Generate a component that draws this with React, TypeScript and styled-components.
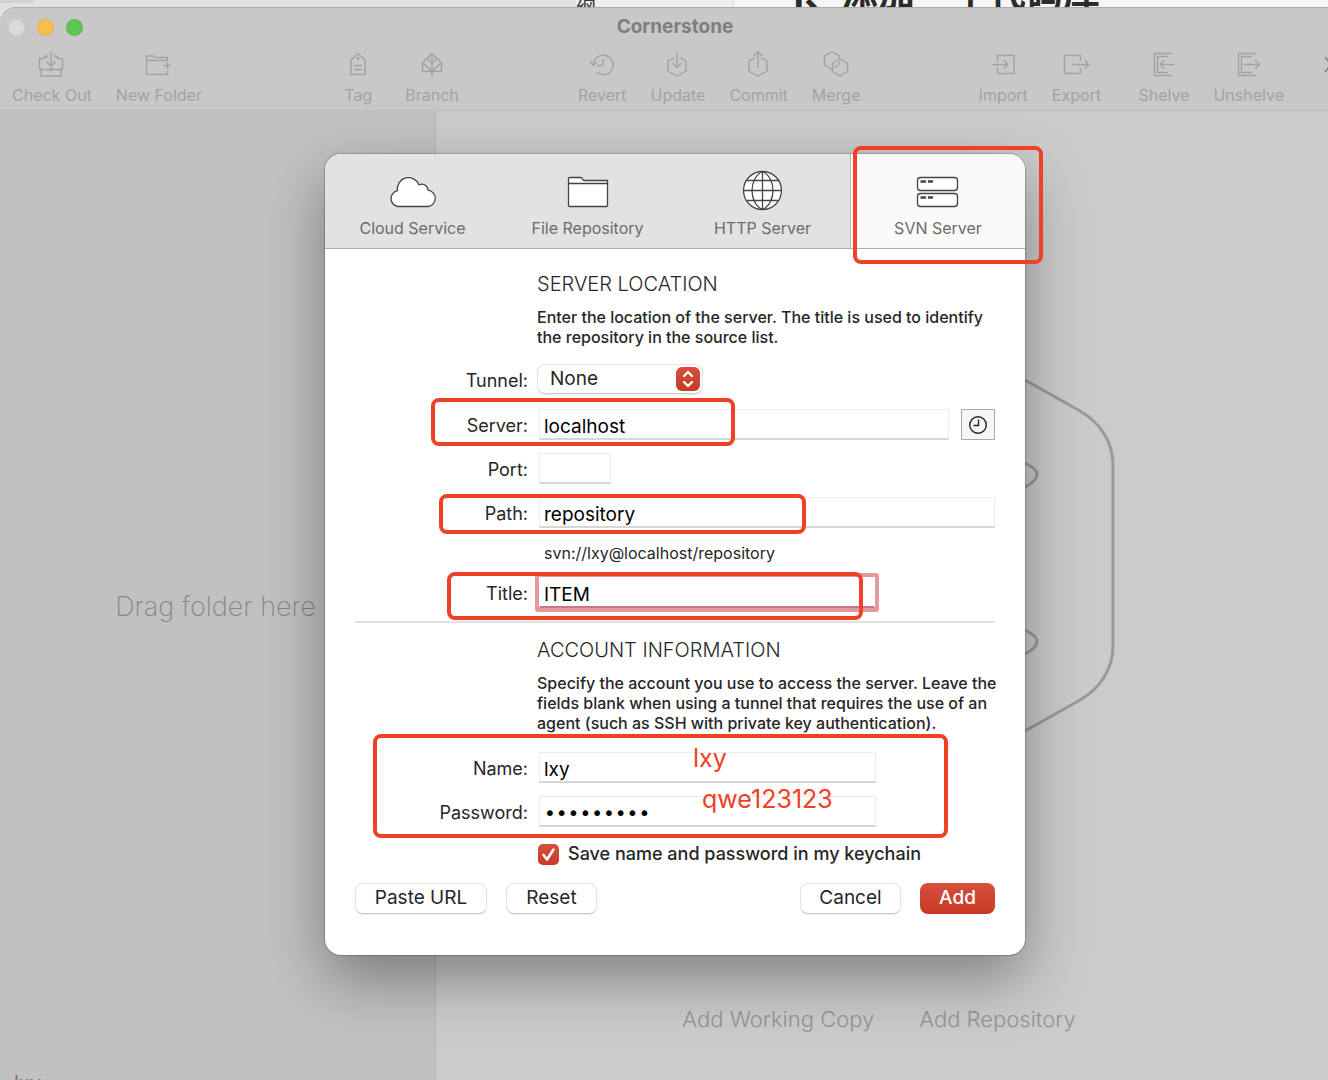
import React from "react";
import styled, { createGlobalStyle, css } from "styled-components";

const RED = "#ee4127";
const SANS = '"Inter", "Liberation Sans", sans-serif';

const GlobalStyle = createGlobalStyle`
  *, *::before, *::after { box-sizing: border-box; }
  body { margin: 0; font-family: ${SANS}; background: #c8c8c8; }
  button, input, select { font-family: inherit; }
`;

const Page = styled.div`
  height: 100vh;
  display: flex;
  flex-direction: column;
  overflow: hidden;
`;

/* The browser page that peeks out above the application window */
const Behind = styled.div`
  flex: none;
  height: 28px;
  margin-bottom: -21px;
  display: flex;
  align-items: flex-start;
  background: #e1e0dd;
  overflow: hidden;
`;

const BehindTab = styled.div`
  width: 34px;
  height: 3px;
  border-radius: 0 0 4px 0;
  background: #d2d1ce;
`;

const BehindOutline = styled.div`
  width: 157px;
  height: 36px;
  margin: -4px 0 0 542px;
  background: #efefef;
  color: #333;
  font: 400 20px/24px "Noto Sans CJK SC", sans-serif;
`;

const BehindArticle = styled.div`
  flex: 1;
  height: 68px;
  margin-top: -32px;
  padding-left: 54px;
  border-left: 1px solid #dcdcdc;
  background: #f5f5f5;
  color: #2b2b2b;
  font: 700 37px/54px "Inter", "Noto Sans CJK SC", sans-serif;
  white-space: nowrap;
`;

/* The window runs past the right edge of the screen */
const Window = styled.div`
  position: relative;
  flex: 1;
  width: calc(100% + 22px);
  display: flex;
  flex-direction: column;
  border-top: 1px solid #adadad;
  border-top-left-radius: 16px;
  background: #c8c8c8;
  overflow: hidden;
`;

const TitleBar = styled.header`
  display: grid;
  grid-template-columns: 1fr auto 1fr;
  align-items: center;
  height: 38px;
  padding: 0 8px;
`;

const Lights = styled.div`
  display: flex;
  gap: 12px;
`;

const Light = styled.button<{ $color: string }>`
  width: 17px;
  height: 17px;
  padding: 0;
  border: 1px solid rgba(0, 0, 0, 0.06);
  border-radius: 50%;
  background: ${(p) => p.$color};
`;

const Title = styled.h1`
  margin: 0;
  font-size: 19px;
  line-height: 24px;
  font-weight: 700;
  color: #7e7e7e;
`;

const Toolbar = styled.nav`
  display: flex;
  align-items: flex-start;
  height: 65px;
  padding: 5px 12px 0;
  border-bottom: 1px solid #bcbcbc;
`;

const ToolGroup = styled.div<{ $gap: number }>`
  display: flex;
  gap: ${(p) => p.$gap}px;
`;

const Spacer = styled.div<{ $grow: number }>`
  flex: ${(p) => p.$grow} 1 0;
`;

const Tool = styled.button`
  display: flex;
  flex-direction: column;
  align-items: center;
  gap: 7px;
  padding: 0;
  border: 0;
  background: none;
  color: #a2a2a2;
  font-size: 16px;
  line-height: 20px;
  white-space: nowrap;
`;

const Icon = styled.svg`
  display: block;
  fill: none;
  stroke: currentColor;
  stroke-width: 1.4;
`;

const More = styled.button`
  padding: 0;
  border: 0;
  margin-left: 38px;
  background: none;
  color: #777;
`;

const Body = styled.div`
  flex: 1;
  display: flex;
  min-height: 0;
`;

const Sidebar = styled.aside`
  position: relative;
  flex: none;
  width: 436px;
  display: flex;
  align-items: center;
  justify-content: center;
  padding: 22px 4px 0 0;
  border-right: 1px solid #b6b6b6;
  background: #c1c1c1;
  color: #868686;
  font-size: 27px;
  font-weight: 200;
`;

const SidebarFooter = styled.div`
  position: absolute;
  left: 14px;
  bottom: -15px;
  font-size: 20px;
  line-height: 24px;
  font-weight: 400;
  color: #777;
`;

const Main = styled.main`
  flex: 1;
  display: flex;
  flex-direction: column;
  align-items: center;
  justify-content: flex-end;
  padding: 0 28px 45px 0;
  background: #cbcbcb;
`;

const Emblem = styled.svg`
  display: block;
  width: 480px;
  height: 540px;
  fill: none;
  stroke: #9a9a9a;
  stroke-width: 3;
`;

const Links = styled.div`
  display: flex;
  gap: 45px;
  margin-top: 172px;
`;

const MainLink = styled.a`
  color: #949494;
  font-size: 22px;
  line-height: 32px;
  font-weight: 300;
  text-decoration: none;
`;

const Overlay = styled.div`
  position: absolute;
  inset: 0;
  display: flex;
  justify-content: center;
  align-items: flex-start;
  padding-top: 146px;
`;

const Dialog = styled.section`
  position: relative;
  width: 700px;
  border-radius: 16px;
  background: #fff;
  box-shadow: 0 0 1px 1px rgba(0, 0, 0, 0.2), 0 24px 60px rgba(0, 0, 0, 0.36);
  color: #262626;
`;

const Tabs = styled.div`
  display: grid;
  grid-template-columns: repeat(4, 1fr);
  border-bottom: 1px solid #adadad;
  border-radius: 16px 16px 0 0;
  background: #e2e2e2;
  overflow: hidden;
`;

const Tab = styled.button<{ $active?: boolean }>`
  display: flex;
  flex-direction: column;
  align-items: center;
  gap: 7px;
  height: 94px;
  padding: 15px 0 0;
  border: 0;
  background: none;
  color: #6c6c6c;
  font-size: 16px;
  line-height: 20px;
  ${(p) =>
    p.$active &&
    css`
      border-left: 1px solid #b4b4b4;
      background: #fafafa;
    `}
`;

const TabIcon = styled.svg`
  display: block;
  width: 48px;
  height: 42px;
  fill: #fff;
  stroke: #444;
  stroke-width: 1.3;
`;

const Form = styled.form`
  padding: 21px 30px 41px;
`;

const Section = styled.div<{ $ruled?: boolean }>`
  ${(p) =>
    p.$ruled &&
    css`
      margin-top: 13px;
      padding-top: 13px;
      border-top: 2px solid #e2e2e2;
    `}
`;

const Intro = styled.div`
  margin-left: 182px;
`;

const Heading = styled.h2`
  margin: 0;
  font-size: 20px;
  line-height: 28px;
  font-weight: 300;
`;

const Text = styled.p`
  margin: 9px 0 0;
  font-size: 16px;
  line-height: 20px;
  font-weight: 450;
  white-space: nowrap;
`;

const Row = styled.div<{ $top: number }>`
  display: grid;
  grid-template-columns: 173px 1fr;
  column-gap: 11px;
  align-items: center;
  margin-top: ${(p) => p.$top}px;
`;

const Label = styled.label`
  padding-top: 3px;
  text-align: right;
  font-size: 18px;
  line-height: 24px;
`;

const Fields = styled.div`
  display: flex;
  align-items: center;
  gap: 12px;
`;

const Input = styled.input<{ $width?: number; $focused?: boolean }>`
  flex: ${(p) => (p.$width ? "none" : "1")};
  width: ${(p) => (p.$width ? p.$width + "px" : "auto")};
  min-width: 0;
  height: 31px;
  padding: 4px 4px 0;
  border: 1px solid #ececec;
  border-bottom: 2px solid #d6d6d6;
  border-radius: 0;
  outline: none;
  background: #fff;
  color: #000;
  font-size: 19px;
  ${(p) =>
    p.$focused &&
    css`
      border-color: #fff;
      border-bottom-color: #c87880;
      box-shadow: 0 0 0 4px #e29a9b;
      border-radius: 1px;
    `}
  &[type="password"] {
    font-family: "DejaVu Sans", sans-serif;
    font-size: 20px;
  }
`;

const SelectBox = styled.div`
  position: relative;
  width: 166px;
  margin-left: -2px;
  color: #fff;
`;

const Select = styled.select`
  appearance: none;
  display: block;
  width: 100%;
  height: 30px;
  padding: 0 36px 2px 12px;
  border: 1px solid #e4e4e4;
  border-bottom-color: #cfcfcf;
  border-radius: 8px;
  background: #fff;
  box-shadow: 0 1px 1px rgba(0, 0, 0, 0.08);
  color: #262626;
  font-size: 19px;
`;

const Stepper = styled.svg`
  position: absolute;
  top: 3px;
  right: 3px;
  width: 24px;
  height: 24px;
  border-radius: 6px;
  background: linear-gradient(#d6503f, #c73a26);
  fill: none;
  stroke: #fff;
  stroke-width: 2.4;
  stroke-linecap: round;
  stroke-linejoin: round;
  pointer-events: none;
`;

const HistoryButton = styled.button`
  flex: none;
  display: grid;
  place-items: center;
  width: 34px;
  height: 31px;
  padding: 0;
  border: 1px solid #a9a9a9;
  background: #f6f6f6;
  color: #222;
`;

const Hint = styled.output`
  display: block;
  margin: 15px 0 0 189px;
  font-size: 16px;
  line-height: 20px;
`;

const CheckLabel = styled.label`
  display: flex;
  align-items: center;
  gap: 9px;
  margin: 14px 0 0 183px;
  font-size: 18px;
  line-height: 26px;
  font-weight: 450;
  white-space: nowrap;
`;

const CheckWrap = styled.span`
  position: relative;
  display: block;
  width: 21px;
  height: 21px;
`;

const Checkbox = styled.input`
  appearance: none;
  display: block;
  width: 21px;
  height: 21px;
  margin: 0;
  border-radius: 5px;
  background: linear-gradient(#d6503f, #c73a26);
`;

const Tick = styled.svg`
  position: absolute;
  inset: 0;
  fill: none;
  stroke: #fff;
  stroke-width: 2.6;
  stroke-linecap: round;
  stroke-linejoin: round;
  pointer-events: none;
`;

const Actions = styled.div`
  display: flex;
  align-items: center;
  margin-top: 16px;
`;

const ActionGroup = styled.div`
  display: flex;
  gap: 19px;
`;

const Push = styled.button<{ $width: number; $primary?: boolean }>`
  width: ${(p) => p.$width}px;
  height: 31px;
  padding: 0 0 2px;
  border: 1px solid #e2e2e2;
  border-bottom-color: #c9c9c9;
  border-radius: 8px;
  background: #fff;
  box-shadow: 0 1px 1px rgba(0, 0, 0, 0.08);
  color: #262626;
  font-size: 19px;
  line-height: 24px;
  ${(p) =>
    p.$primary &&
    css`
      border: 0;
      background: linear-gradient(#d4503e, #c83823);
      box-shadow: none;
      color: #fff;
      font-weight: 500;
    `}
`;

/* Hand-made markup laid over the dialog */
const Mark = styled.div<{ $x: number; $y: number; $w: number; $h: number }>`
  position: absolute;
  left: ${(p) => p.$x}px;
  top: ${(p) => p.$y}px;
  width: ${(p) => p.$w}px;
  height: ${(p) => p.$h}px;
  border: 4px solid ${RED};
  border-radius: 8px;
  pointer-events: none;
`;

const Note = styled.span<{ $x: number; $y: number }>`
  position: absolute;
  left: ${(p) => p.$x}px;
  top: ${(p) => p.$y}px;
  color: ${RED};
  font-size: 25px;
  line-height: 32px;
  pointer-events: none;
`;

const toolIcons: Record<string, React.ReactNode> = {
  "Check Out": (
    <>
      <path d="M9.5 5.5V3.5M16.5 5.5V3.5M9.5 5.5H6.5V7.5H1.5V18H3V25H23V18H24.5V7.5H19.5V5.5H16.5M3 18.5H10Q13 16.5 16 18.5H23M10 18.5Q13 20.5 16 18.5" />
      <path d="M13 0.5V14.5M8.5 10.5L13 15L17.5 10.5" />
    </>
  ),
  "New Folder": (
    <path d="M22.5 10V6.5H10L8.5 5H1.5V23.5H22.5V19.5M1.5 9.5H22.5M22.5 11V18M18.5 14.5H26" />
  ),
  Tag: (
    <>
      <path d="M13 2.5L20 9V23.5H6V9ZM9 14.5H17M9 18.5H17" />
      <circle cx="13" cy="7.5" r="0.8" />
    </>
  ),
  Branch: (
    <path d="M13 2.5L22.5 12V20.5H3.5V12ZM13 2.5V26M13 20.5L3.5 11.5M13 20.5L22.5 11.5M13 12.5L8.5 8M13 12.5L17.5 8" />
  ),
  Revert: (
    <path d="M4.5 14.5A9.8 9.8 0 1 1 8 21.5M14 8V14.5H8.5M1 10.5L4.5 14.5L8 11" />
  ),
  Update: (
    <path d="M10 6.8L4 10V20L13 25L22 20V10L16 6.8M13 1.5V16M8.5 12L13 16.5L17.5 12" />
  ),
  Commit: (
    <path d="M10 6.8L4 10V20L13 25L22 20V10L16 6.8M13 16.5V1M8.5 5L13 0.8L17.5 5" />
  ),
  Merge: (
    <path d="M9 18.5L1.5 14V5L9 0.8L16.5 5V7.5M17 8L9.5 12.5V20.5L17 25L24.5 20.5V12.5ZM11.5 16Q16 15 16.5 10.5" />
  ),
  Import: (
    <path d="M7.5 11V4.5H24V22.5H7.5V16.5M1.5 13.5H17.5M13.5 9L18 13.5L13.5 18" />
  ),
  Export: (
    <path d="M17.5 10V4.5H1.5V22.5H17.5V17M8.5 13.5H25.5M21.5 9L26 13.5L21.5 18" />
  ),
  Shelve: (
    <path d="M22 2.5H4.5V24.5H22M18 5.5H7.5V21.5H18M24.5 13.5H10M14.5 9L10 13.5L14.5 18" />
  ),
  Unshelve: (
    <path d="M21 2.5H3.5V24.5H21M17 5.5H6.5V21.5H17M8.5 13.5H24.5M20 9L24.5 13.5L20 18" />
  ),
};

const ToolButton = ({ name }: { name: string }) => (
  <Tool type="button">
    <Icon width="27" height="27" viewBox="0 0 27 27" aria-hidden="true">
      {toolIcons[name]}
    </Icon>
    {name}
  </Tool>
);

const tabIcons: Record<string, React.ReactNode> = {
  "Cloud Service": (
    <path d="M9 37.5A8 8 0 0 1 8.5 21.7A11.2 11.2 0 0 1 30 15.8A6.2 6.2 0 0 1 39 21.2A8.2 8.2 0 0 1 39 37.5Z" />
  ),
  "File Repository": (
    <>
      <path d="M4.500 36.500V9.500Q4.500 8.500 5.500 8.500H16.500Q18 8.500 18.500 10Q19 11.500 20.500 11.500H43.500V36.500Q43.500 37.500 42.500 37.500H5.500Q4.500 37.500 4.500 36.500Z" />
      <path d="M4.500 14.500H43.500" />
    </>
  ),
  "HTTP Server": (
    <>
      <circle cx="23.5" cy="21.5" r="19" />
      <path
        fill="none"
        d="M23.5 2.5V40.5M4.5 21.5H42.5M8 11.5H39M8 31.5H39M23.5 2.5C9.5 9 9.5 34 23.5 40.5M23.5 2.5C37.5 9 37.5 34 23.5 40.5"
      />
    </>
  ),
  "SVN Server": (
    <>
      <rect x="3.5" y="8.5" width="40" height="13" rx="3" />
      <rect x="3.5" y="24.5" width="40" height="13" rx="3" />
      <path strokeWidth="2.4" d="M6.5 12.5H12M14 12.5H19M6.5 28.5H12M14 28.5H19" />
    </>
  ),
};

export default function App() {
  return (
    <Page>
      <GlobalStyle />
      <Behind aria-hidden="true">
        <BehindTab />
        <BehindOutline>纲</BehindOutline>
        <BehindArticle>1、添加一个代码库</BehindArticle>
      </Behind>
      <Window>
        <TitleBar>
          <Lights>
            <Light type="button" aria-label="Close" $color="#dcdbd9" />
            <Light type="button" aria-label="Minimize" $color="#f6bd4f" />
            <Light type="button" aria-label="Zoom" $color="#61c454" />
          </Lights>
          <Title>Cornerstone</Title>
        </TitleBar>
        <Toolbar>
          <ToolGroup $gap={24}>
            <ToolButton name="Check Out" />
            <ToolButton name="New Folder" />
          </ToolGroup>
          <Spacer $grow={141} />
          <ToolGroup $gap={33}>
            <ToolButton name="Tag" />
            <ToolButton name="Branch" />
          </ToolGroup>
          <Spacer $grow={118} />
          <ToolGroup $gap={24}>
            <ToolButton name="Revert" />
            <ToolButton name="Update" />
            <ToolButton name="Commit" />
            <ToolButton name="Merge" />
          </ToolGroup>
          <Spacer $grow={117} />
          <ToolGroup $gap={24}>
            <ToolButton name="Import" />
            <ToolButton name="Export" />
          </ToolGroup>
          <Spacer $grow={37} />
          <ToolGroup $gap={24}>
            <ToolButton name="Shelve" />
            <ToolButton name="Unshelve" />
          </ToolGroup>
          <More type="button" aria-label="More tools">
            <Icon width="16" height="27" viewBox="0 0 16 27">
              <path d="M3 6L9 13.500L3 21M9 6L15 13.500L9 21" />
            </Icon>
          </More>
        </Toolbar>
        <Body>
          <Sidebar>
            Drag folder here
            <SidebarFooter>lxy</SidebarFooter>
          </Sidebar>
          <Main>
            <Emblem viewBox="0 0 480 540" aria-hidden="true">
              <path d="M386 89L441 120C462 132 474 152 474 174V355C474 377 462 397 441 409L386 440M386 172Q398 178 398 183Q398 190 386 196M386 339Q398 345 398 350Q398 357 386 363" />
            </Emblem>
            <Links>
              <MainLink href="#working-copy">Add Working Copy</MainLink>
              <MainLink href="#repository">Add Repository</MainLink>
            </Links>
          </Main>
        </Body>
        <Overlay>
          <Dialog role="dialog" aria-label="Add repository">
            <Tabs role="tablist">
              {Object.keys(tabIcons).map((name) => (
                <Tab
                  key={name}
                  type="button"
                  role="tab"
                  aria-selected={name === "SVN Server"}
                  $active={name === "SVN Server"}
                >
                  <TabIcon viewBox="0 0 48 42" aria-hidden="true">
                    {tabIcons[name]}
                  </TabIcon>
                  {name}
                </Tab>
              ))}
            </Tabs>
            <Form onSubmit={(e) => e.preventDefault()}>
              <Section>
                <Intro>
                  <Heading>SERVER LOCATION</Heading>
                  <Text>
                    Enter the location of the server. The title is used to identify
                    <br />
                    the repository in the source list.
                  </Text>
                </Intro>
                <Row $top={17}>
                  <Label htmlFor="tunnel">Tunnel:</Label>
                  <SelectBox>
                    <Select id="tunnel" defaultValue="None">
                      <option>None</option>
                    </Select>
                    <Stepper viewBox="0 0 24 24">
                      <path d="M8 9L12 5L16 9M8 15L12 19L16 15" />
                    </Stepper>
                  </SelectBox>
                </Row>
                <Row $top={15}>
                  <Label htmlFor="server">Server:</Label>
                  <Fields>
                    <Input id="server" defaultValue="localhost" />
                    <HistoryButton type="button" aria-label="Recent servers">
                      <Icon width="20" height="20" viewBox="0 0 20 20">
                        <circle cx="10" cy="10" r="8.300" />
                        <path d="M10.500 4.500V10.500H5.500" />
                      </Icon>
                    </HistoryButton>
                  </Fields>
                </Row>
                <Row $top={13}>
                  <Label htmlFor="port">Port:</Label>
                  <Input id="port" $width={72} />
                </Row>
                <Row $top={13}>
                  <Label htmlFor="path">Path:</Label>
                  <Input id="path" defaultValue="repository" />
                </Row>
                <Hint htmlFor="server path">svn://lxy@localhost/repository</Hint>
                <Row $top={14}>
                  <Label htmlFor="title">Title:</Label>
                  <Input id="title" $width={336} $focused defaultValue="ITEM" />
                </Row>
              </Section>
              <Section $ruled>
                <Intro>
                  <Heading>ACCOUNT INFORMATION</Heading>
                  <Text>
                    Specify the account you use to access the server. Leave the
                    <br />
                    fields blank when using a tunnel that requires the use of an
                    <br />
                    agent (such as SSH with private key authentication).
                  </Text>
                </Intro>
                <Row $top={19}>
                  <Label htmlFor="name">Name:</Label>
                  <Input id="name" $width={337} defaultValue="lxy" />
                </Row>
                <Row $top={13}>
                  <Label htmlFor="password">Password:</Label>
                  <Input id="password" type="password" $width={337} defaultValue="qwe123123" />
                </Row>
                <CheckLabel>
                  <CheckWrap>
                    <Checkbox type="checkbox" defaultChecked />
                    <Tick viewBox="0 0 21 21">
                      <path d="M5.500 11L9 15.500L15.500 5.500" />
                    </Tick>
                  </CheckWrap>
                  Save name and password in my keychain
                </CheckLabel>
              </Section>
              <Actions>
                <ActionGroup>
                  <Push type="button" $width={132}>Paste URL</Push>
                  <Push type="reset" $width={91}>Reset</Push>
                </ActionGroup>
                <Spacer $grow={1} />
                <ActionGroup>
                  <Push type="button" $width={101}>Cancel</Push>
                  <Push type="submit" $width={75} $primary>Add</Push>
                </ActionGroup>
              </Actions>
            </Form>
            <Mark $x={528} $y={-8} $w={190} $h={118} />
            <Mark $x={106} $y={244} $w={304} $h={48} />
            <Mark $x={114} $y={340} $w={367} $h={40} />
            <Mark $x={122} $y={418} $w={416} $h={48} />
            <Mark $x={48} $y={580} $w={575} $h={104} />
            <Note $x={368} $y={588}>lxy</Note>
            <Note $x={377} $y={629}>qwe123123</Note>
          </Dialog>
        </Overlay>
      </Window>
    </Page>
  );
}
